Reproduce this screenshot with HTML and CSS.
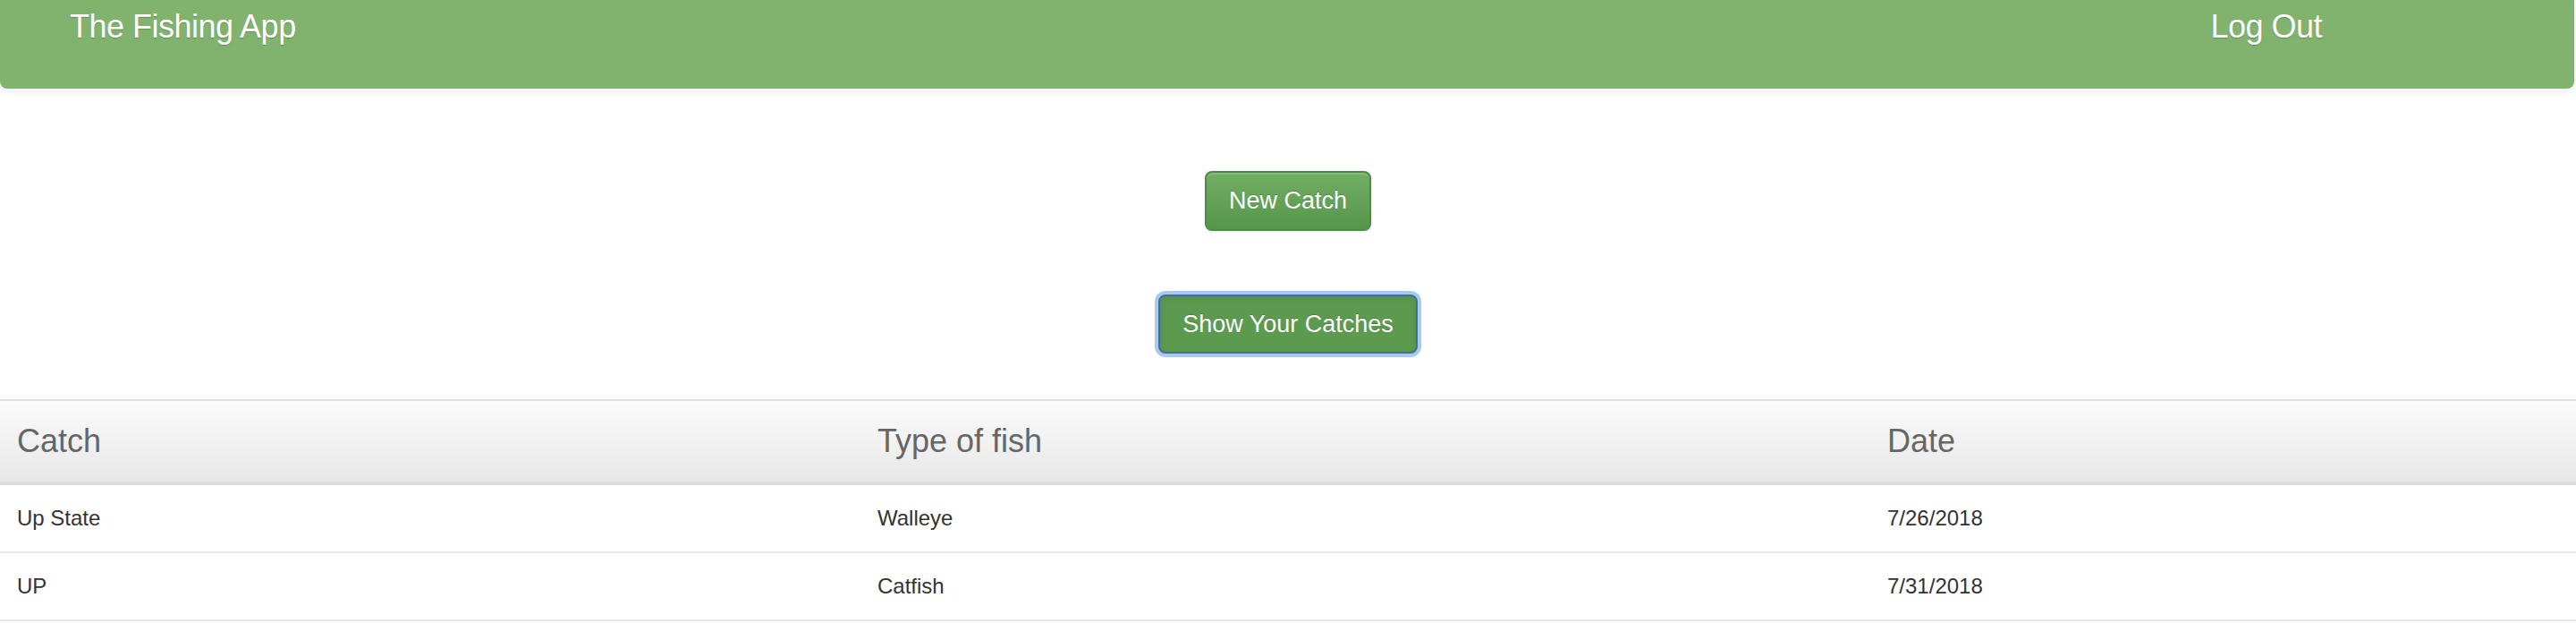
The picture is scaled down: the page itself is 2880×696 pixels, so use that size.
FILE: index.html
```html
<!DOCTYPE html>
<html lang="en">
<head>
<meta charset="utf-8">
<title>The Fishing App</title>
<link rel="stylesheet" href="styles.css">
</head>
<body>
<nav class="navbar">
  <a class="brand" href="#">The Fishing App</a>
  <a class="logout" href="#">Log Out</a>
</nav>
<main class="main">
  <div class="actions">
    <button class="btn" type="button">New Catch</button>
    <button class="btn btn-focus" type="button">Show Your Catches</button>
  </div>
  <table class="catches">
    <thead>
      <tr>
        <th class="col-catch">Catch</th>
        <th class="col-type">Type of fish</th>
        <th class="col-date">Date</th>
      </tr>
    </thead>
    <tbody>
      <tr><td>Up State</td><td>Walleye</td><td>7/26/2018</td></tr>
      <tr><td>UP</td><td>Catfish</td><td>7/31/2018</td></tr>
    </tbody>
  </table>
</main>
</body>
</html>
```
FILE: styles.css
```css
html, body {
  margin: 0;
  padding: 0;
  background: #fff;
}

body {
  font-family: "Liberation Sans", Arial, Helvetica, sans-serif;
  overflow: hidden;
}

.navbar {
  display: flex;
  align-items: flex-start;
  height: 99px;
  margin-right: 2px;
  padding: 12px 282px 0 78px;
  box-sizing: border-box;
  background: #81b36f;
  border-radius: 0 0 8px 8px;
  box-shadow: 0 4px 10px rgba(0, 0, 0, 0.07);
}

.brand,
.logout {
  color: #fff;
  text-decoration: none;
  font-size: 36px;
  line-height: 36px;
  letter-spacing: -0.5px;
  text-shadow: 0 1px 1px rgba(0, 0, 0, 0.22);
}

.logout {
  margin-left: auto;
}

.main {
  display: flex;
  flex-direction: column;
}

.actions {
  display: flex;
  flex-direction: column;
  align-items: center;
  padding-top: 92px;
  gap: 71px;
}

.btn {
  height: 67px;
  padding: 0 25px;
  font-family: "Liberation Sans", Arial, Helvetica, sans-serif;
  font-size: 27px;
  color: #fff;
  border: 2px solid #4e8b42;
  border-radius: 8px;
  background: linear-gradient(to bottom, #72ae64 0%, #55964a 100%);
  text-shadow: 0 -1px 0 rgba(0, 0, 0, 0.2);
  box-shadow: inset 0 2px 0 rgba(255, 255, 255, 0.15), 0 2px 2px rgba(0, 0, 0, 0.06);
  cursor: pointer;
}

.btn-focus {
  height: 66px;
  background: #5b9a4f;
  border-color: #41709a;
  box-shadow: 0 0 0 4px #a9c9f2, inset 0 3px 5px rgba(0, 0, 0, 0.08);
}

.catches {
  margin-top: 51px;
  width: 100%;
  border-collapse: collapse;
}

.catches th {
  height: 90px;
  padding: 0 19px;
  text-align: left;
  font-weight: normal;
  font-size: 36px;
  color: #666;
  background: linear-gradient(to bottom, #fbfbfb 0%, #e8e8e8 100%);
  border-top: 2px solid #e0e0e0;
  border-bottom: 4px solid #dcdcdc;
  vertical-align: middle;
}

.col-catch { width: 924px; }
.col-type { width: 1091px; }

.catches td {
  height: 74px;
  padding: 0 19px;
  font-size: 24px;
  color: #333;
  border-bottom: 2px solid #e8e8e8;
  vertical-align: middle;
}
```
